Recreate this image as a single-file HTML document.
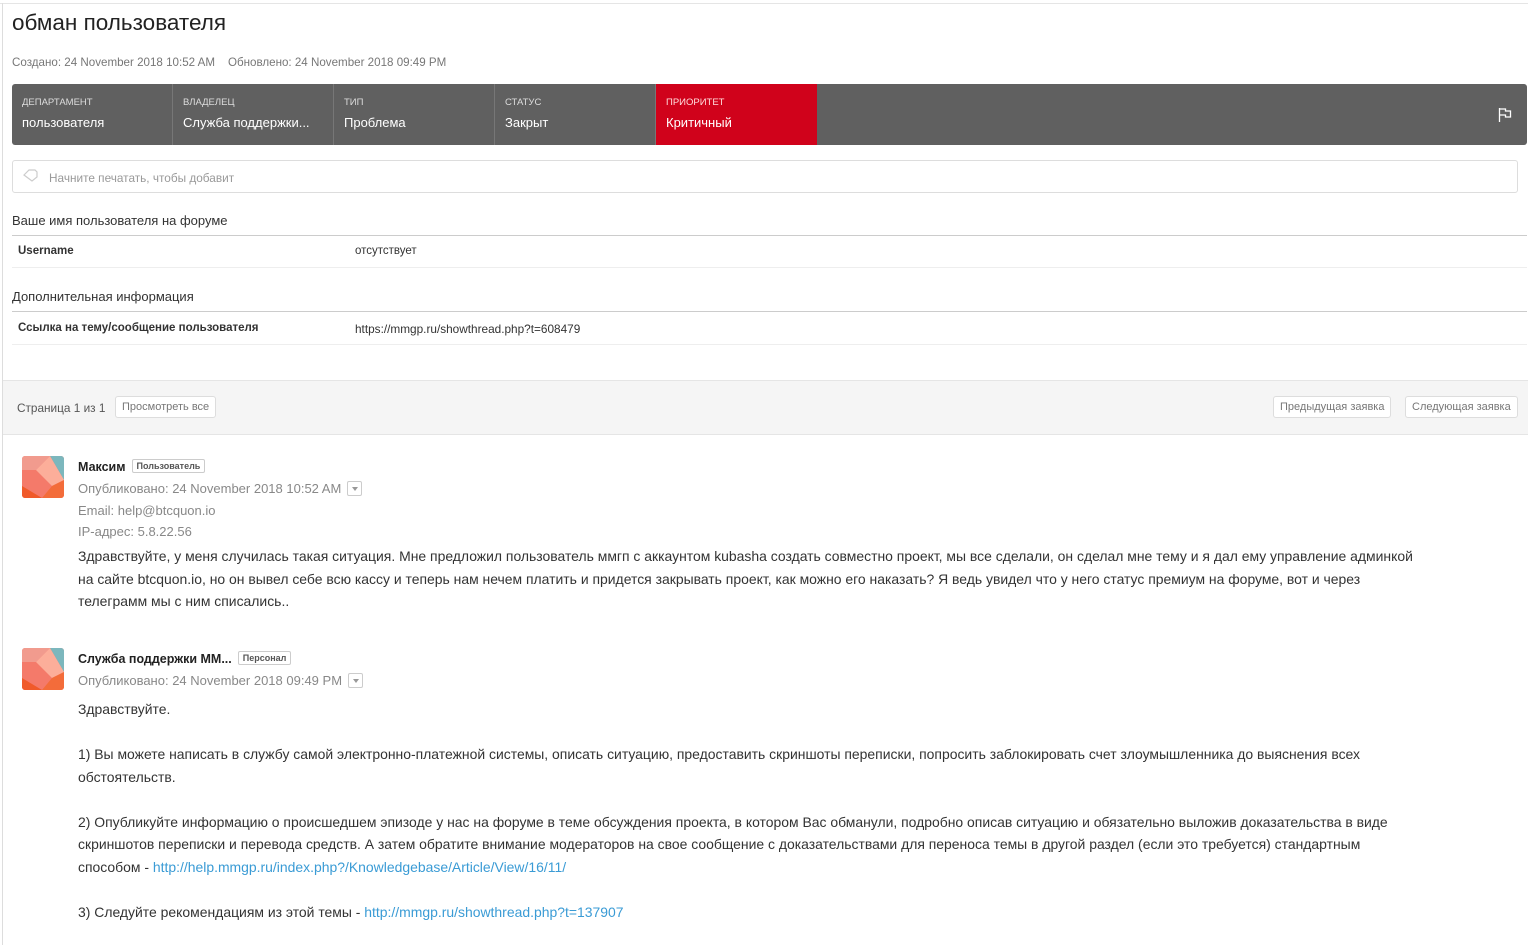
<!DOCTYPE html>
<html><head><meta charset="utf-8"><style>
*{margin:0;padding:0;box-sizing:border-box}
body{width:1528px;height:945px;overflow:hidden;background:#fff;font-family:"Liberation Sans",sans-serif;color:#333;position:relative}
.a{position:absolute;white-space:nowrap}
.bar{position:absolute;left:12px;top:84px;width:1515px;height:61px;background:#606060;border-radius:3px;overflow:hidden}
.cell{position:absolute;top:0;height:61px;width:161px;border-right:1px solid #777}
.cell .l{position:absolute;left:10px;top:13px;font-size:9.5px;color:#ddd;text-transform:uppercase}
.cell .v{position:absolute;left:10px;top:31px;font-size:13px;color:#fff}
.hr{position:absolute;left:12px;width:1515px;height:1px;background:#ddd}
.btn{position:absolute;border:1px solid #ddd;border-radius:3px;background:#fff;font-size:11px;color:#777;padding:4px 6px;white-space:nowrap}
.t{font-size:13.95px;color:#333;line-height:22.5px}
.g{color:#888;font-size:13px}
a{color:#3a9bd5;text-decoration:none}
.badge{display:inline-block;border:1px solid #ccc;border-radius:2px;font-size:9px;font-weight:bold;color:#555;padding:1px 4px;margin-left:6px;vertical-align:2px}
.dd{display:inline-block;width:15px;height:15px;border:1px solid #ccc;border-radius:2px;vertical-align:-3px;margin-left:6px;position:relative}
.dd:after{content:"";position:absolute;left:4px;top:5px;border:3px solid transparent;border-top:4px solid #999}
</style></head><body>
<div class="a" style="left:0;top:3px;width:1528px;height:1px;background:#e5e5e5"></div>
<div class="a" style="left:2px;top:3px;width:1px;height:942px;background:#ddd"></div>
<div class="a" style="left:12px;top:10px;font-size:22.5px;color:#222">обман пользователя</div>
<div class="a" style="left:12px;top:56px;font-size:11.6px;color:#777">Создано: 24 November 2018 10:52 AM &nbsp;&nbsp; Обновлено: 24 November 2018 09:49 PM</div>
<div class="bar">
<div class="cell" style="left:0"><div class="l">Департамент</div><div class="v">пользователя</div></div>
<div class="cell" style="left:161px"><div class="l">Владелец</div><div class="v">Служба поддержки...</div></div>
<div class="cell" style="left:322px"><div class="l">Тип</div><div class="v">Проблема</div></div>
<div class="cell" style="left:483px"><div class="l">Статус</div><div class="v">Закрыт</div></div>
<div class="cell" style="left:644px;background:#d0021b;border:none"><div class="l" style="color:#fdd">Приоритет</div><div class="v">Критичный</div></div>
<svg style="position:absolute;left:1486px;top:24px" width="14" height="14" viewBox="0 0 14 14"><path d="M1.5 0v14M1.5 1h6v2h5v6h-5v-2h-6" fill="none" stroke="#fff" stroke-width="1.3"/></svg>
</div>
<div class="a" style="left:12px;top:160px;width:1506px;height:33px;border:1px solid #ddd;border-radius:3px"></div>
<svg class="a" style="left:23px;top:169px" width="15" height="13" viewBox="0 0 15 13"><path d="M1 6l5-5h6l2 2v5l-5 4z" fill="none" stroke="#ccc" stroke-width="1.2"/></svg>
<div class="a" style="left:49px;top:171px;font-size:11.8px;color:#999">Начните печатать, чтобы добавит</div>
<div class="a" style="left:12px;top:213px;font-size:13px">Ваше имя пользователя на форуме</div>
<div class="hr" style="top:235px;background:#ccc"></div>
<div class="a" style="left:18px;top:245px;font-size:11.5px;font-weight:bold">Username</div>
<div class="a" style="left:355px;top:245px;font-size:11.5px">отсутствует</div>
<div class="hr" style="top:267px;background:#eee"></div>
<div class="a" style="left:12px;top:289px;font-size:13px">Дополнительная информация</div>
<div class="hr" style="top:311px;background:#ccc"></div>
<div class="a" style="left:18px;top:322px;font-size:11.5px;font-weight:bold">Ссылка на тему/сообщение пользователя</div>
<div class="a" style="left:355px;top:322px;font-size:11.8px">https://mmgp.ru/showthread.php?t=608479</div>
<div class="hr" style="top:344px;background:#eee"></div>
<div class="a" style="left:3px;top:380px;width:1525px;height:55px;background:#f5f5f5;border-top:1px solid #e5e5e5;border-bottom:1px solid #e5e5e5"></div>
<div class="a" style="left:17px;top:401px;font-size:11.8px;color:#555">Страница 1 из 1</div>
<div class="btn" style="left:115px;top:396px">Просмотреть все</div>
<div class="btn" style="left:1273px;top:396px">Предыдущая заявка</div>
<div class="btn" style="left:1405px;top:396px">Следующая заявка</div>

<svg class="a" style="left:22px;top:456px" width="42" height="42" viewBox="0 0 42 42"><defs><clipPath id="c"><rect width="42" height="42" rx="3"/></clipPath></defs><g clip-path="url(#c)"><rect width="42" height="42" fill="#f47a6a"/><polygon points="0,0 28,0 14,14 0,14" fill="#f19b8e"/><polygon points="28,0 42,0 42,24" fill="#7cb7bd"/><polygon points="14,14 28,0 42,24 30,30" fill="#fcae9a"/><polygon points="30,30 42,24 42,42 20,42" fill="#f36c3a"/><polygon points="0,30 20,42 0,42" fill="#f05a2a"/></g></svg>
<div class="a" style="left:78px;top:459px;font-size:12.5px;font-weight:bold;color:#222">Максим<span class="badge">Пользователь</span></div>
<div class="a g" style="left:78px;top:481px">Опубликовано: 24 November 2018 10:52 AM<span class="dd"></span></div>
<div class="a g" style="left:78px;top:503px">Email: help@btcquon.io</div>
<div class="a g" style="left:78px;top:524px">IP-адрес: 5.8.22.56</div>
<div class="a t" style="left:78px;top:545px">Здравствуйте, у меня случилась такая ситуация. Мне предложил пользователь ммгп с аккаунтом kubasha создать совместно проект, мы все сделали, он сделал мне тему и я дал ему управление админкой<br>на сайте btcquon.io, но он вывел себе всю кассу и теперь нам нечем платить и придется закрывать проект, как можно его наказать? Я ведь увидел что у него статус премиум на форуме, вот и через<br>телеграмм мы с ним списались..</div>

<svg class="a" style="left:22px;top:648px" width="42" height="42" viewBox="0 0 42 42"><defs><clipPath id="d"><rect width="42" height="42" rx="3"/></clipPath></defs><g clip-path="url(#d)"><rect width="42" height="42" fill="#f47a6a"/><polygon points="0,0 28,0 14,14 0,14" fill="#f19b8e"/><polygon points="28,0 42,0 42,24" fill="#7cb7bd"/><polygon points="14,14 28,0 42,24 30,30" fill="#fcae9a"/><polygon points="30,30 42,24 42,42 20,42" fill="#f36c3a"/><polygon points="0,30 20,42 0,42" fill="#f05a2a"/></g></svg>
<div class="a" style="left:78px;top:651px;font-size:12.5px;font-weight:bold;color:#222">Служба поддержки ММ...<span class="badge">Персонал</span></div>
<div class="a g" style="left:78px;top:673px">Опубликовано: 24 November 2018 09:49 PM<span class="dd"></span></div>
<div class="a t" style="left:78px;top:698px">Здравствуйте.<br><br>1) Вы можете написать в службу самой электронно-платежной системы, описать ситуацию, предоставить скриншоты переписки, попросить заблокировать счет злоумышленника до выяснения всех<br>обстоятельств.<br><br>2) Опубликуйте информацию о происшедшем эпизоде у нас на форуме в теме обсуждения проекта, в котором Вас обманули, подробно описав ситуацию и обязательно выложив доказательства в виде<br>скриншотов переписки и перевода средств. А затем обратите внимание модераторов на свое сообщение с доказательствами для переноса темы в другой раздел (если это требуется) стандартным<br>способом - <a>http://help.mmgp.ru/index.php?/Knowledgebase/Article/View/16/11/</a><br><br>3) Следуйте рекомендациям из этой темы - <a>http://mmgp.ru/showthread.php?t=137907</a></div>
</body></html>
